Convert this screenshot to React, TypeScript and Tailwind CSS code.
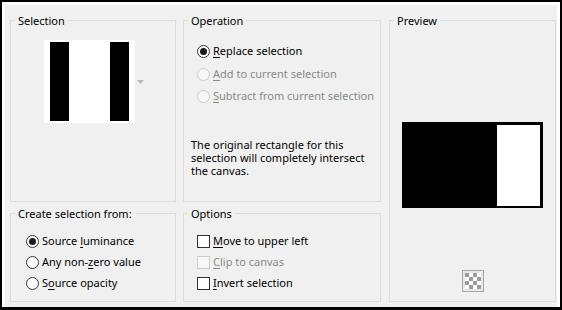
import React from "react";

function Radio({ checked = false, disabled = false }: { checked?: boolean; disabled?: boolean }) {
  return (
    <span
      className={
        "flex h-[13px] w-[13px] shrink-0 items-center justify-center rounded-full border " +
        (disabled ? "border-[#cccccc] bg-[#f7f7f7]" : "border-[#333333] bg-white")
      }
    >
      {checked && <span className="h-[7px] w-[7px] rounded-full bg-[#1a1a1a]" />}
    </span>
  );
}

function Check({ disabled = false }: { disabled?: boolean }) {
  return (
    <span
      className={
        "block h-[13px] w-[13px] shrink-0 border " +
        (disabled ? "border-[#cccccc] bg-[#f7f7f7]" : "border-[#333333] bg-white")
      }
    />
  );
}

function U({ children }: { children: React.ReactNode }) {
  return <span className="underline decoration-1 underline-offset-[2px]">{children}</span>;
}

function Legend({ children }: { children: React.ReactNode }) {
  return (
    <legend className="ml-[4px] px-[3px] leading-[16px]">
      <span className="relative top-[1px]">{children}</span>
    </legend>
  );
}

export default function App() {
  return (
    <div className="h-[310px] w-[562px] border-b-[3px] border-l-2 border-r-2 border-t-2 border-black bg-white font-['Noto_Sans',sans-serif] text-[11px] text-black">
      <div className="h-full border-l-[3px] border-r-[3px] border-t-[3px] border-white bg-[#f0f0f0] pl-[5px] pt-[7px]">
        <div className="grid grid-cols-[166px_198px_168px] grid-rows-[190px_97px] gap-x-[7px] gap-y-[3px]">
          {/* Selection */}
          <fieldset className="border border-[#dcdcdc]">
            <Legend>Selection</Legend>
            <div className="ml-[33px] mt-[12px] flex items-center gap-[2px]">
              <div className="flex h-[83px] w-[91px] gap-[41px] bg-white px-[6px] py-[2px]">
                <div className="h-full w-[19px] bg-black" />
                <div className="h-full w-[19px] bg-black" />
              </div>
              <svg width="7" height="4" viewBox="0 0 7 4">
                <path d="M0 0 L7 0 L3.5 4 Z" fill="#b8b8b8" />
              </svg>
            </div>
          </fieldset>

          {/* Operation */}
          <fieldset className="border border-[#dcdcdc]">
            <Legend>Operation</Legend>
            <div className="ml-[13px] mt-[12px] flex flex-col">
              <div className="flex h-[23px] items-center gap-[3px]">
                <Radio checked />
                <span>
                  <U>R</U>eplace selection
                </span>
              </div>
              <div className="flex h-[22px] items-center gap-[3px] text-[#8a8a8a]">
                <Radio disabled />
                <span>
                  <U>A</U>dd to current selection
                </span>
              </div>
              <div className="flex h-[22px] items-center gap-[3px] text-[#8a8a8a]">
                <Radio disabled />
                <span>
                  <U>S</U>ubtract from current selection
                </span>
              </div>
            </div>
            <p className="ml-[7px] mt-[31px] w-[175px] leading-[13px]">
              The original rectangle for this selection will completely intersect the canvas.
            </p>
          </fieldset>

          {/* Preview */}
          <fieldset className="row-span-2 ml-[1px] w-[167px] border border-[#dcdcdc]">
            <Legend>Preview</Legend>
            <div className="flex flex-col items-center">
              <div className="mt-[94px] flex h-[86px] w-[141px] justify-end bg-black pb-[2px] pr-[3px] pt-[3px]">
                <div className="h-full w-[43px] bg-white" />
              </div>
              <div className="mt-[62px] grid h-[22px] w-[22px] grid-cols-4 grid-rows-4 border border-[#a8a8a8] bg-[#e8e8e8] p-[2px]">
                {Array.from({ length: 16 }).map((_, i) => (
                  <span
                    key={i}
                    className={(Math.floor(i / 4) + (i % 4)) % 2 === 0 ? "bg-[#9c9c9c]" : "bg-white"}
                  />
                ))}
              </div>
            </div>
          </fieldset>

          {/* Create selection from */}
          <fieldset className="border border-[#dcdcdc]">
            <Legend>Create selection from:</Legend>
            <div className="ml-[15px] mt-[10px] flex flex-col">
              <div className="flex h-[21px] items-center gap-[3px]">
                <Radio checked />
                <span>
                  Source <U>l</U>uminance
                </span>
              </div>
              <div className="flex h-[21px] items-center gap-[3px]">
                <Radio />
                <span>
                  Any non-<U>z</U>ero value
                </span>
              </div>
              <div className="flex h-[21px] items-center gap-[3px]">
                <Radio />
                <span>
                  S<U>o</U>urce opacity
                </span>
              </div>
            </div>
          </fieldset>

          {/* Options */}
          <fieldset className="border border-[#dcdcdc]">
            <Legend>Options</Legend>
            <div className="ml-[13px] mt-[10px] flex flex-col">
              <div className="flex h-[21px] items-center gap-[3px]">
                <Check />
                <span>
                  <U>M</U>ove to upper left
                </span>
              </div>
              <div className="flex h-[21px] items-center gap-[3px] text-[#8a8a8a]">
                <Check disabled />
                <span>
                  <U>C</U>lip to canvas
                </span>
              </div>
              <div className="flex h-[21px] items-center gap-[3px]">
                <Check />
                <span>
                  <U>I</U>nvert selection
                </span>
              </div>
            </div>
          </fieldset>
        </div>
      </div>
    </div>
  );
}
